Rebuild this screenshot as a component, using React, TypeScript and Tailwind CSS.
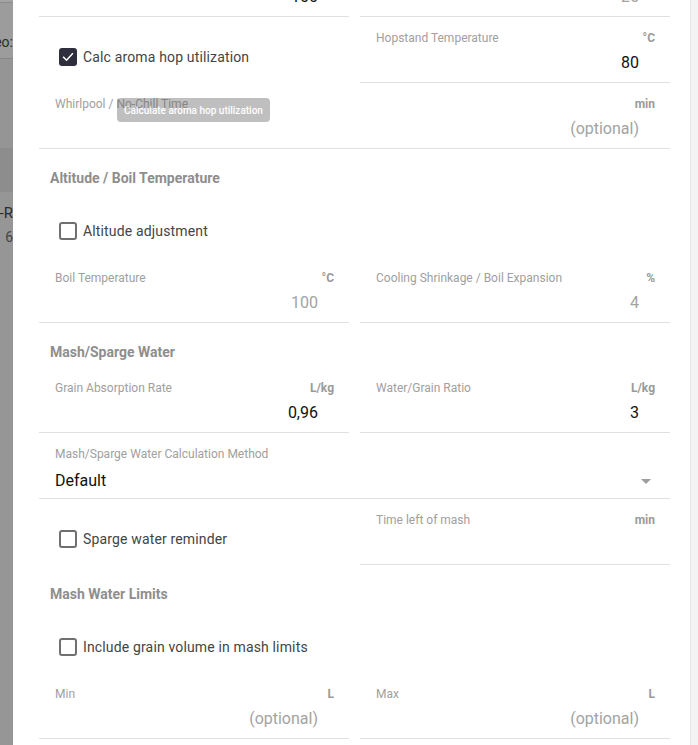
import React from "react";

const LINE = "border-b border-[#e0e0e0]";

function Field({
  label,
  unit,
  value,
  muted,
  className = "",
  children,
}: {
  label: string;
  unit?: string;
  value: string;
  muted?: boolean;
  className?: string;
  children?: React.ReactNode;
}) {
  return (
    <div className={`relative h-[66px] ${LINE} ${className}`}>
      <div className="flex justify-between pl-[16px] pr-[15px] pt-[14px] text-[12px] leading-[14px]">
        <span className="text-[#a0a0a0]">{label}</span>
        {unit ? <span className="font-bold text-[#9a9a9a]">{unit}</span> : null}
      </div>
      <div
        className={`mt-[8px] pr-[31px] text-right text-[16px] leading-[20px] ${
          muted ? "text-[#a3a3a3]" : "text-[#111]"
        }`}
      >
        {value}
      </div>
      {children}
    </div>
  );
}

function Check({ label, checked, pt }: { label: string; checked?: boolean; pt: string }) {
  return (
    <div className={`flex h-full items-start pl-[20px] ${pt}`}>
      <div className="flex items-center">
        {checked ? (
          <span className="flex h-[18px] w-[18px] items-center justify-center rounded-[3px] bg-[#2e2e3c]">
            <svg width="14" height="14" viewBox="0 0 24 24" fill="none">
              <path d="M4.5 12.5l5 5 10-11" stroke="#fff" strokeWidth="2.6" strokeLinecap="square" />
            </svg>
          </span>
        ) : (
          <span className="h-[18px] w-[18px] rounded-[3px] border-2 border-[#707070]" />
        )}
        <span className="ml-[6px] text-[14px] leading-[18px] tracking-[0.15px] text-[#444]">{label}</span>
      </div>
    </div>
  );
}

function Heading({ children }: { children: React.ReactNode }) {
  return (
    <div className="col-span-2 h-[44px] pl-[11px] pt-[20px] text-[14px] font-bold leading-[18px] text-[#8e8e8e]">
      {children}
    </div>
  );
}

export default function App() {
  return (
    <div
      className="flex h-[745px] w-[698px] overflow-hidden bg-white"
      style={{ fontFamily: "Roboto, 'Noto Sans', sans-serif" }}
    >
      {/* dimmed page behind the dialog */}
      <div className="flex w-[13px] shrink-0 flex-col overflow-hidden text-[14px] text-[#2a2a2a]">
        <div className="h-[3px] shrink-0 border-b border-[#8c8c8c] bg-[#a3a3a3]" />
        <div className="flex h-[56px] shrink-0 items-center justify-end whitespace-nowrap border-b border-[#878787] bg-[#9c9c9c] pt-[24px]">
          <span>Video:</span>
        </div>
        <div className="h-[89px] shrink-0 bg-[#959595]" />
        <div className="h-[44px] shrink-0 bg-[#8d8d8d]" />
        <div className="flex-1 bg-[#969696]">
          <div className="flex h-[30px] items-end justify-end whitespace-nowrap text-[15px] leading-[18px]">
            <span>X-R</span>
          </div>
          <div className="flex h-[24px] items-end justify-end whitespace-nowrap text-[14px] leading-[18px] text-[#444]">
            <span>6</span>
          </div>
        </div>
      </div>

      {/* dialog */}
      <div className="flex-1 overflow-hidden bg-white pl-[26px] pr-[20px]">
        <div className="grid grid-cols-2 gap-x-[11px]">
          <Field className="-mt-[49px]" label="Batch Size" unit="L" value="100" />
          <Field className="-mt-[49px]" label="Boil Time" unit="min" value="25" muted />

          <div className="h-[66px]">
            <Check label="Calc aroma hop utilization" checked pt="pt-[31px]" />
          </div>
          <Field label="Hopstand Temperature" unit="°C" value="80" />

          <Field className="col-span-2" label="Whirlpool / No-Chill Time" unit="min" value="(optional)" muted>
            <div className="absolute left-[78px] top-[15px] flex h-[24px] w-[153px] items-center justify-center rounded-[4px] bg-[#616161] text-[10px] font-medium text-white opacity-40">
              Calculate aroma hop utilization
            </div>
          </Field>

          <Heading>Altitude / Boil Temperature</Heading>
          <div className="col-span-2 h-[64px]">
            <Check label="Altitude adjustment" pt="pt-[29px]" />
          </div>
          <Field label="Boil Temperature" unit="°C" value="100" muted />
          <Field label="Cooling Shrinkage / Boil Expansion" unit="%" value="4" muted />

          <Heading>Mash/Sparge Water</Heading>
          <Field label="Grain Absorption Rate" unit="L/kg" value="0,96" />
          <Field label="Water/Grain Ratio" unit="L/kg" value="3" />

          <div className={`relative col-span-2 h-[66px] ${LINE}`}>
            <div className="pl-[16px] pt-[14px] text-[12px] leading-[14px] text-[#a0a0a0]">
              Mash/Sparge Water Calculation Method
            </div>
            <div className="mt-[10px] flex items-center justify-between pl-[16px] pr-[19px] text-[16px] leading-[20px] text-[#111]">
              <span>Default</span>
              <svg width="10" height="5" viewBox="0 0 10 5">
                <path d="M0 0h10L5 5z" fill="#9e9e9e" />
              </svg>
            </div>
          </div>

          <div className="h-[66px]">
            <Check label="Sparge water reminder" pt="pt-[31px]" />
          </div>
          <Field label="Time left of mash" unit="min" value="" />

          <Heading>Mash Water Limits</Heading>
          <div className="col-span-2 h-[64px]">
            <Check label="Include grain volume in mash limits" pt="pt-[29px]" />
          </div>
          <Field label="Min" unit="L" value="(optional)" muted />
          <Field label="Max" unit="L" value="(optional)" muted />
        </div>
      </div>

      {/* scrollbar track */}
      <div className="w-[8px] shrink-0 border-l border-[#e6e6e6] bg-[#f3f3f3]" />
    </div>
  );
}
